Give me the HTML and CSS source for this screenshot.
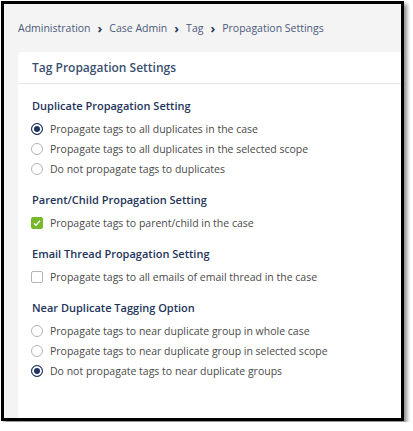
FILE: index.html
```html
<!DOCTYPE html>
<html lang="en">
<head>
    <meta charset="UTF-8">
    <meta name="viewport" content="width=device-width, initial-scale=1.0">
    <title>Propagation Settings</title>
    <link rel="stylesheet" href="styles.css">
</head>
<body>
    <div class="frame">
        <nav class="breadcrumb">
            <span>Administration</span>
            <span class="sep">&#8250;</span>
            <span>Case Admin</span>
            <span class="sep">&#8250;</span>
            <span>Tag</span>
            <span class="sep">&#8250;</span>
            <span>Propagation Settings</span>
        </nav>

        <div class="card">
            <div class="card-header">Tag Propagation Settings</div>
            <div class="card-body">

                <div class="group">
                    <h3>Duplicate Propagation Setting</h3>
                    <label class="option">
                        <input type="radio" name="duplicate" checked>
                        <span>Propagate tags to all duplicates in the case</span>
                    </label>
                    <label class="option">
                        <input type="radio" name="duplicate">
                        <span>Propagate tags to all duplicates in the selected scope</span>
                    </label>
                    <label class="option">
                        <input type="radio" name="duplicate">
                        <span>Do not propagate tags to duplicates</span>
                    </label>
                </div>

                <div class="group">
                    <h3>Parent/Child Propagation Setting</h3>
                    <label class="option">
                        <input type="checkbox" checked>
                        <span>Propagate tags to parent/child in the case</span>
                    </label>
                </div>

                <div class="group">
                    <h3>Email Thread Propagation Setting</h3>
                    <label class="option">
                        <input type="checkbox">
                        <span>Propagate tags to all emails of email thread in the case</span>
                    </label>
                </div>

                <div class="group">
                    <h3>Near Duplicate Tagging Option</h3>
                    <label class="option">
                        <input type="radio" name="near">
                        <span>Propagate tags to near duplicate group in whole case</span>
                    </label>
                    <label class="option">
                        <input type="radio" name="near">
                        <span>Propagate tags to near duplicate group in selected scope</span>
                    </label>
                    <label class="option">
                        <input type="radio" name="near" checked>
                        <span>Do not propagate tags to near duplicate groups</span>
                    </label>
                </div>

            </div>
        </div>
    </div>
</body>
</html>
```

FILE: styles.css
```css
body {
    font-family: 'Open Sans', sans-serif;
    background-color: #fff;
    margin: 0;
    padding: 0;
}

.frame {
    margin: 1px;
    width: 397px;
    height: 414px;
    border: 3px solid #000;
    background-color: #f4f4f4;
    box-shadow: 3px 3px 4px rgba(0, 0, 0, 0.45);
    display: flex;
    flex-direction: column;
    overflow: hidden;
}

.breadcrumb {
    display: flex;
    align-items: center;
    gap: 7px;
    padding: 17px 14px 0;
    height: 14px;
    line-height: 14px;
    font-size: 10.5px;
    color: #4b5a7a;
}

.breadcrumb .sep {
    font-weight: 700;
    font-size: 13px;
    color: #2c3a58;
}

.card {
    flex: 1;
    margin: 17px 0 0 14px;
    background-color: #fff;
    border-top-left-radius: 3px;
}

.card-header {
    height: 31px;
    line-height: 31px;
    padding-left: 14px;
    border-bottom: 1px solid #e6e6e6;
    font-size: 12px;
    font-weight: 600;
    color: #3a4f70;
}

.card-body {
    padding: 14px 14px 0;
}

.group + .group {
    margin-top: 13px;
}

.group h3 {
    margin: 0 0 5px;
    height: 16px;
    line-height: 16px;
    font-size: 11px;
    font-weight: 600;
    color: #23345a;
}

.option {
    display: flex;
    align-items: center;
    height: 20px;
    gap: 7px;
    font-size: 10.5px;
    color: #4a4a4a;
}

.option input {
    appearance: none;
    -webkit-appearance: none;
    margin: 0 0 0 -1px;
    width: 12px;
    height: 12px;
    flex-shrink: 0;
    border: 1px solid #b4b4b4;
    background-color: #fff;
    box-sizing: border-box;
}

.option input[type="radio"] {
    border-radius: 50%;
}

.option input[type="radio"]:checked {
    border: 1px solid #1e3362;
    background-color: #1e3362;
    box-shadow: inset 0 0 0 2px #fff;
}

.option input[type="checkbox"] {
    border-radius: 2px;
}

.option input[type="checkbox"]:checked {
    border-color: #76b82a;
    background-color: #76b82a;
    background-image: url("data:image/svg+xml,%3Csvg xmlns='http://www.w3.org/2000/svg' viewBox='0 0 12 12'%3E%3Cpath d='M3 6.2l2 2 4-4.4' fill='none' stroke='%23fff' stroke-width='1.3'/%3E%3C/svg%3E");
    background-size: 12px 12px;
    background-position: center;
}
```
